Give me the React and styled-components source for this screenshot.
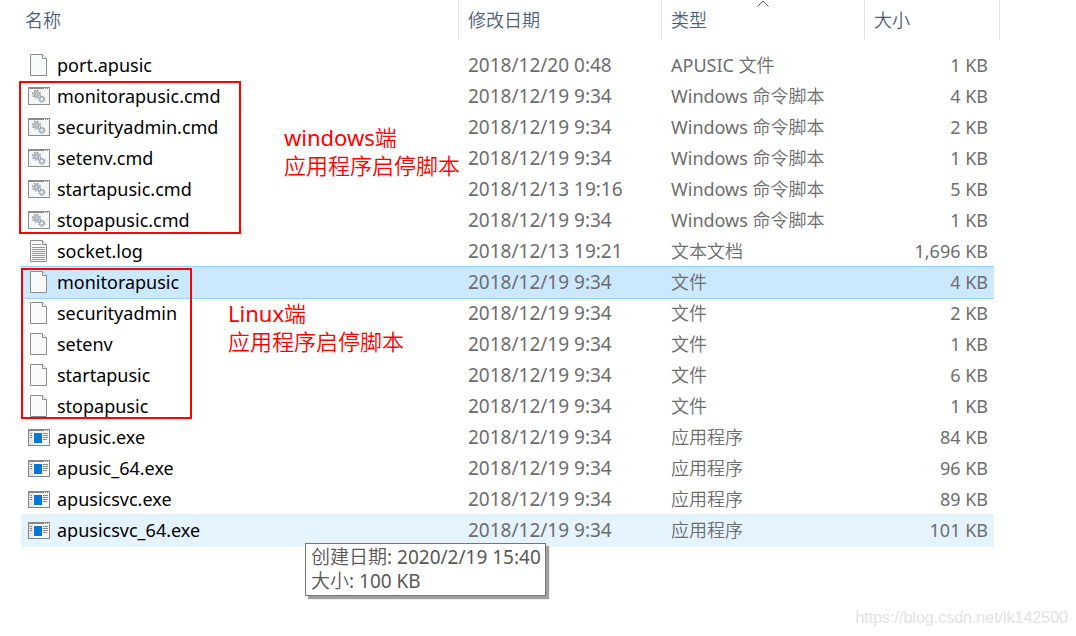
import { useState } from "react";
import styled, { createGlobalStyle } from "styled-components";

const files = [
  { name: "port.apusic", date: "2018/12/20 0:48", type: "APUSIC 文件", size: "1 KB", icon: "file" },
  { name: "monitorapusic.cmd", date: "2018/12/19 9:34", type: "Windows 命令脚本", size: "4 KB", icon: "cmd" },
  { name: "securityadmin.cmd", date: "2018/12/19 9:34", type: "Windows 命令脚本", size: "2 KB", icon: "cmd" },
  { name: "setenv.cmd", date: "2018/12/19 9:34", type: "Windows 命令脚本", size: "1 KB", icon: "cmd" },
  { name: "startapusic.cmd", date: "2018/12/13 19:16", type: "Windows 命令脚本", size: "5 KB", icon: "cmd" },
  { name: "stopapusic.cmd", date: "2018/12/19 9:34", type: "Windows 命令脚本", size: "1 KB", icon: "cmd" },
  { name: "socket.log", date: "2018/12/13 19:21", type: "文本文档", size: "1,696 KB", icon: "log" },
  { name: "monitorapusic", date: "2018/12/19 9:34", type: "文件", size: "4 KB", icon: "file" },
  { name: "securityadmin", date: "2018/12/19 9:34", type: "文件", size: "2 KB", icon: "file" },
  { name: "setenv", date: "2018/12/19 9:34", type: "文件", size: "1 KB", icon: "file" },
  { name: "startapusic", date: "2018/12/19 9:34", type: "文件", size: "6 KB", icon: "file" },
  { name: "stopapusic", date: "2018/12/19 9:34", type: "文件", size: "1 KB", icon: "file" },
  { name: "apusic.exe", date: "2018/12/19 9:34", type: "应用程序", size: "84 KB", icon: "exe" },
  { name: "apusic_64.exe", date: "2018/12/19 9:34", type: "应用程序", size: "96 KB", icon: "exe" },
  { name: "apusicsvc.exe", date: "2018/12/19 9:34", type: "应用程序", size: "89 KB", icon: "exe" },
  { name: "apusicsvc_64.exe", date: "2018/12/19 9:34", type: "应用程序", size: "101 KB", icon: "exe" },
];

const FileIcon = ({ lines }) => (
  <svg width="18" height="22" viewBox="0 0 18 22" aria-hidden="true">
    <path d="M0.5 0.5H12.5L16.5 4.5V21.5H0.5Z" fill="#f8f9f9" stroke="#8b8b8b" />
    <path d="M12.5 0.5V4.5H16.5" fill="#fff" stroke="#8b8b8b" />
    {lines && (
      <path
        d="M2 4.5H11M2 7.5H15M2 9.5H15M2 11.5H15M2 13.5H15M2 15.5H15M2 17.5H15M2 19.5H15"
        stroke="#999"
        fill="none"
      />
    )}
  </svg>
);

const CmdIcon = () => (
  <svg width="22" height="18" viewBox="0 0 22 18" aria-hidden="true">
    <rect x="0.5" y="0.5" width="21" height="17" fill="#f5f6f6" stroke="#8b8b8b" />
    <path d="M0 1H22" stroke="#8b8b8b" strokeWidth="2" />
    <path d="M16 1.5h1M18 1.5h1M20 1.5h1" stroke="#fff" />
    <circle cx="8.5" cy="7.2" r="3.9" fill="none" stroke="#8c98a0" strokeWidth="1.2" strokeDasharray="1.6 1.46" />
    <circle cx="8.5" cy="7.2" r="2.8" fill="#cdd5da" stroke="#98a4ac" />
    <circle cx="8.5" cy="7.2" r="1.2" fill="#f5f6f6" stroke="#87939b" strokeWidth="0.8" />
    <circle cx="13.8" cy="12.2" r="3" fill="none" stroke="#8c98a0" strokeWidth="1.2" strokeDasharray="1.3 1.06" />
    <circle cx="13.8" cy="12.2" r="2.1" fill="#dbe1e5" stroke="#98a4ac" />
    <circle cx="13.8" cy="12.2" r="0.9" fill="#fff" />
  </svg>
);

const ExeIcon = () => (
  <svg width="22" height="19" viewBox="0 -2 22 19" aria-hidden="true">
    <rect x="0.5" y="0.5" width="21" height="16" fill="#f7f7f7" stroke="#858585" />
    <path d="M0 1H22" stroke="#858585" strokeWidth="2" />
    <path d="M16 1.5h1M18 1.5h1M20 1.5h1" stroke="#fff" />
    <rect x="1" y="2" width="4" height="14" fill="#e6e4e2" />
    <rect x="6" y="4" width="8" height="10" fill="#0078d7" />
    <path d="M2 4.5h2M2 6.5h2M2 8.5h2M15 4.5h5M15 6.5h5M15 8.5h5M15 10.5h4" stroke="#8a8a8a" />
  </svg>
);

const icons = {
  file: <FileIcon />,
  log: <FileIcon lines />,
  cmd: <CmdIcon />,
  exe: <ExeIcon />,
};

const App = () => {
  const [selected, setselected] = useState("monitorapusic");
  const hovered = "apusicsvc_64.exe";

  return (
    <>
      <GlobalStyle />
      <Explorer>
        <FileTable>
          <colgroup>
            <col />
            <Col $width={203} />
            <Col $width={203} />
            <Col $width={129} />
            <Col $width={6} />
          </colgroup>
          <thead>
            <tr>
              <HeadCell $first>
                <HeadButton type="button">名称</HeadButton>
              </HeadCell>
              <HeadCell>
                <HeadButton type="button">修改日期</HeadButton>
              </HeadCell>
              <HeadCell aria-sort="ascending">
                <SortArrow width="12" height="7" viewBox="0 0 12 7" aria-hidden="true">
                  <path d="M0.5 6.5L6 1L11.5 6.5" fill="none" stroke="#5a5a5a" />
                </SortArrow>
                <HeadButton type="button">类型</HeadButton>
              </HeadCell>
              <HeadCell colSpan={2}>
                <HeadButton type="button">大小</HeadButton>
              </HeadCell>
            </tr>
          </thead>
          <tbody>
            {files.map((file) => (
              <Row
                key={file.name}
                $selected={file.name === selected}
                $hovered={file.name === hovered}
                onClick={() => setselected(file.name)}
              >
                <Cell>
                  <FileName>
                    <IconSlot>{icons[file.icon]}</IconSlot>
                    {file.name}
                  </FileName>
                </Cell>
                <Cell $large>{file.date}</Cell>
                <Cell>{file.type}</Cell>
                <Cell $right>{file.size}</Cell>
              </Row>
            ))}
          </tbody>
        </FileTable>

        <Frame $left={19} $top={81} $width={222} $height={153} />
        <Note $left={284} $top={123}>
          windows端
          <br />
          应用程序启停脚本
        </Note>
        <Frame $left={21} $top={268} $width={171} $height={151} />
        <Note $left={228} $top={299}>
          Linux端
          <br />
          应用程序启停脚本
        </Note>

        <Tooltip role="tooltip">
          创建日期: 2020/2/19 15:40
          <br />
          大小: 100 KB
        </Tooltip>
        <Watermark>https://blog.csdn.net/lk142500</Watermark>
      </Explorer>
    </>
  );
};

const fonts = `"Noto Sans", "Noto Sans CJK SC DemiLight", "Noto Sans CJK SC", sans-serif`;

const GlobalStyle = createGlobalStyle`
  body {
    margin: 0;
    background: #fff;
    font-family: ${fonts};
  }
`;

const Explorer = styled.main`
  position: relative;
  box-sizing: border-box;
  min-height: 100vh;
  padding: 0 76px 0 21px;
`;

const FileTable = styled.table`
  width: 100%;
  table-layout: fixed;
  border-collapse: separate;
  border-spacing: 0;

  thead::after {
    content: "";
    display: block;
    height: 10px;
  }
`;

const Col = styled.col`
  width: ${({ $width }) => $width}px;
`;

const HeadCell = styled.th`
  position: relative;
  height: 40px;
  padding: 0 0 0 ${({ $first }) => ($first ? 4 : 9)}px;
  border-right: 1px solid #e2e2e2;
  text-align: left;
`;

const HeadButton = styled.button`
  padding: 0;
  border: 0;
  background: none;
  color: #4c607a;
  font: 350 18px/24px ${fonts};
`;

const SortArrow = styled.svg`
  position: absolute;
  top: 0;
  left: calc(50% - 6px);
`;

const Cell = styled.td`
  height: 29px;
  padding: 0 ${({ $right }) => ($right ? 6 : 0)}px 2px 9px;
  color: #6d6d6d;
  font-size: ${({ $large }) => ($large ? 19 : 18)}px;
  line-height: 24px;
  text-align: ${({ $right }) => ($right ? "right" : "left")};
  white-space: nowrap;

  &:first-child {
    padding-left: 7px;
    color: #000;
  }
`;

const Row = styled.tr`
  ${Cell} {
    background: ${({ $selected, $hovered }) =>
      $selected ? "#cce8ff" : $hovered ? "#e5f3ff" : "transparent"};
    box-shadow: ${({ $selected, $hovered }) =>
      $selected
        ? "0 -1px 0 #99d1ff, 0 1px 0 #99d1ff"
        : $hovered
        ? "0 -1px 0 #e5f3ff, 0 1px 0 #e5f3ff"
        : "none"};
  }
`;

const FileName = styled.span`
  display: flex;
  align-items: center;
  gap: 7px;
`;

const IconSlot = styled.span`
  display: flex;
  justify-content: center;
  width: 22px;
`;

const Frame = styled.div`
  position: absolute;
  left: ${({ $left }) => $left}px;
  top: ${({ $top }) => $top}px;
  box-sizing: border-box;
  width: ${({ $width }) => $width}px;
  height: ${({ $height }) => $height}px;
  border: 2px solid #f00;
  pointer-events: none;
`;

const Note = styled.p`
  position: absolute;
  left: ${({ $left }) => $left}px;
  top: ${({ $top }) => $top}px;
  margin: 0;
  color: #f00;
  font-size: 22px;
  line-height: 28px;
  white-space: nowrap;
`;

const Tooltip = styled.div`
  position: absolute;
  left: 305px;
  top: 543px;
  padding: 1px 4px 2px 5px;
  border: 1px solid #767676;
  background: #fff;
  box-shadow: 3px 3px 1px #a0a0a0;
  color: #575757;
  font-size: 19px;
  line-height: 24px;
  white-space: nowrap;
`;

const Watermark = styled.div`
  position: absolute;
  right: 8px;
  bottom: 8px;
  color: #e2e2e2;
  font: 16px/20px "Liberation Sans", Arial, sans-serif;
`;

export default App;
